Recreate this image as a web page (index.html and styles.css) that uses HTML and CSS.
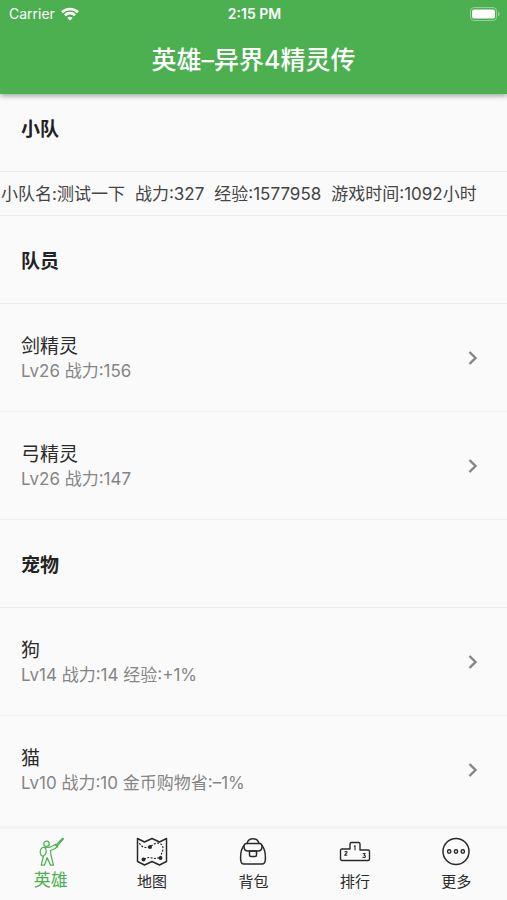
FILE: index.html
```html
<!DOCTYPE html>
<html lang="zh-CN">
<head>
<meta charset="utf-8">
<meta name="viewport" content="width=device-width, initial-scale=1">
<title>英雄–异界4精灵传</title>
<link rel="stylesheet" href="styles.css">
</head>
<body>
<header class="app-bar">
  <div class="status">
    <div class="carrier">
      <span>Carrier</span>
      <svg width="18" height="14" viewBox="0 0 18 14" fill="none" stroke="#fff" stroke-width="2.6" aria-hidden="true">
        <path d="M1 5.2C5.4.9 12.6.9 17 5.2M3.900 8.200c2.900-2.800 7.300-2.800 10.200 0"/>
        <path d="M6.300 10.700c1.500-1.400 3.900-1.400 5.400 0L9 13.500z" fill="#fff" stroke="none"/>
      </svg>
    </div>
    <span class="time">2:15 PM</span>
    <svg class="battery" width="30" height="14" viewBox="0 0 30 14" aria-hidden="true">
      <rect x=".5" y=".5" width="26" height="13" rx="3.5" fill="none" stroke="#fff" stroke-opacity=".4"/>
      <rect x="2" y="2.500" width="23" height="9" rx="2" fill="#fff"/>
      <path d="M28 4.500c2 .8 2 4.200 0 5z" fill="#fff" fill-opacity=".4"/>
    </svg>
  </div>
  <h1>英雄–异界4精灵传</h1>
</header>
<main>
  <h2 class="first">小队</h2>
  <p class="team"><span>小队名:测试一下</span><span>战力:327</span><span>经验:1577958</span><span>游戏时间:1092小时</span></p>
  <h2>队员</h2>
  <ul>
    <li><a href="#"><span class="text"><span class="name">剑精灵</span><span class="detail">Lv26 战力:156</span></span><svg class="chevron" width="10" height="16" viewBox="0 0 10 16" aria-hidden="true"><path d="M1.500 2 7.500 8l-6 6"/></svg></a></li>
    <li><a href="#"><span class="text"><span class="name">弓精灵</span><span class="detail">Lv26 战力:147</span></span><svg class="chevron" width="10" height="16" viewBox="0 0 10 16" aria-hidden="true"><path d="M1.500 2 7.500 8l-6 6"/></svg></a></li>
  </ul>
  <h2>宠物</h2>
  <ul class="last">
    <li><a href="#"><span class="text"><span class="name">狗</span><span class="detail">Lv14 战力:14 经验:+1%</span></span><svg class="chevron" width="10" height="16" viewBox="0 0 10 16" aria-hidden="true"><path d="M1.500 2 7.500 8l-6 6"/></svg></a></li>
    <li><a href="#"><span class="text"><span class="name">猫</span><span class="detail">Lv10 战力:10 金币购物省:–1%</span></span><svg class="chevron" width="10" height="16" viewBox="0 0 10 16" aria-hidden="true"><path d="M1.500 2 7.500 8l-6 6"/></svg></a></li>
  </ul>
</main>
<nav>
  <a class="active" href="#" aria-current="page">
    <svg width="32" height="32" viewBox="0 0 32 32" aria-hidden="true">
      <g stroke-width="1.200">
        <circle cx="11.500" cy="6.800" r="2.700"/>
        <path d="M9 10.300 15 10.200l5.500-2.700 1.700 2-2 2-4.700 2 .5 5 2.500 9.700h-3l-3.300-7.500-2.800 7.500H6.200L8.500 19"/>
        <path d="M9.500 10.500c-2-.8-4 1-4.300 4 0 2.300.8 4.200 2.500 4.800 2.300-.8 3.500-2.500 3.600-5 0-2-.6-3.200-1.800-3.800z"/>
        <path d="M20.500 8.500 28 .8M21.500 9.800 28.700 1.500M19.800 6.800l3.200 3.500"/>
      </g>
    </svg>
    <span>英雄</span>
  </a>
  <a href="#">
    <svg width="32" height="32" viewBox="0 0 32 32" aria-hidden="true">
      <path stroke-width="1.500" d="M1.500 1.500 8.500 5l7.500-3.500L23.500 5l7-3.500v23l-7 3.500-7.500-3.500L8.500 28l-7-3.500z"/>
      <path stroke-width="1.200" stroke-dasharray="2 1.400" d="M3.500 6c2 4.500 6 5.500 10.500 3.500l5-3c5-1.500 8 1 8 5 0 3.500-2 5-2.500 9M8 22l5-1.500 6 1 5.500-1"/>
      <g fill="currentColor" stroke="none"><circle cx="14" cy="10" r="2"/><circle cx="7.500" cy="22.500" r="2"/><circle cx="24.500" cy="21" r="2"/></g>
    </svg>
    <span>地图</span>
  </a>
  <a href="#">
    <svg width="32" height="32" viewBox="0 0 32 32" aria-hidden="true">
      <g stroke-width="1.500">
        <path d="M10 6.500C11.500.2 20.500.2 22 6.500"/>
        <path d="M9.500 6.500h13c2 0 2.500 1 2.500 3 0 3-1.500 4.500-4 4.500H11c-2.500 0-4-1.500-4-4.500 0-2 .5-3 2.500-3z"/>
        <path d="M7 8.500C4 12 3.300 17 3.700 23c.2 3 1 4 3.300 4h18c2.300 0 3.100-1 3.300-4 .4-6-.3-11-3.300-14.500"/>
        <path d="M12.500 14v4c0 1 .5 1.500 1.500 1.500h4c1 0 1.500-.5 1.500-1.500v-4z"/>
      </g>
    </svg>
    <span>背包</span>
  </a>
  <a href="#">
    <svg width="32" height="32" viewBox="0 0 32 32" aria-hidden="true">
      <path stroke-width="1.400" d="M11 12V7c0-1 .5-1.500 1.500-1.500h7c1 0 1.500.5 1.500 1.500v6h8c1 0 1.500.5 1.500 1.500V22c0 1-.5 1.500-1.500 1.500H3c-1 0-1.500-.5-1.500-1.500v-8.500c0-1 .5-1.500 1.500-1.500z"/>
      <path stroke-width="1.100" d="m15 9.500 1-.8v4.500M5.700 15.200c.5-1.100 2.500-1 2.300.3-.1 1-2 1.500-2.300 2.800h2.600M23.700 16.500h2.500l-1.200 1.700c2-.1 1.800 2.500-.2 2.300-.6 0-1-.3-1.200-.8"/>
    </svg>
    <span>排行</span>
  </a>
  <a href="#">
    <svg width="32" height="32" viewBox="0 0 32 32" aria-hidden="true">
      <circle cx="16" cy="14.500" r="13" stroke-width="1.500"/>
      <g stroke-width="1.400"><circle cx="9.200" cy="14.500" r="1.700"/><circle cx="16" cy="14.500" r="1.700"/><circle cx="22.800" cy="14.500" r="1.700"/></g>
    </svg>
    <span>更多</span>
  </a>
</nav>
</body>
</html>
```
FILE: styles.css
```css
* {
  box-sizing: border-box;
}

body {
  display: flex;
  flex-direction: column;
  min-height: 100vh;
  margin: 0;
  background: #fafafa;
  color: #2a2a2a;
  font-family: Inter, "Noto Sans CJK SC", sans-serif;
}

h1,
h2,
p,
ul {
  margin: 0;
  padding: 0;
}

a {
  color: inherit;
  text-decoration: none;
}

.app-bar {
  z-index: 1;
  padding-bottom: 16px;
  background: #4caf50;
  box-shadow: 0 2px 5px rgba(0, 0, 0, 0.35);
  color: #fff;
}

.status {
  display: grid;
  grid-template-columns: 1fr auto 1fr;
  align-items: center;
  height: 27px;
  padding: 0 7px 0 9px;
  font-size: 14px;
}

.carrier {
  display: flex;
  align-items: center;
  gap: 6px;
}

.time {
  font-size: 14px;
  font-weight: 600;
}

.battery {
  justify-self: end;
}

h1 {
  padding-top: 15px;
  font-size: 25px;
  font-weight: 500;
  line-height: 36px;
  text-align: center;
}

main {
  flex: 1;
}

h2 {
  padding: 32px 21px 27px;
  border-bottom: 1px solid #ececec;
  color: #222;
  font-size: 19px;
  font-weight: 600;
  line-height: 28px;
}

h2.first {
  padding-top: 22px;
}

.team {
  display: flex;
  gap: 10px;
  padding: 10px 1px 8px;
  border-bottom: 1px solid #ececec;
  color: #444;
  font-size: 17px;
  line-height: 25px;
  white-space: nowrap;
}

ul {
  list-style: none;
}

li a {
  display: flex;
  align-items: center;
  justify-content: space-between;
  padding: 30px 29px 29px 21px;
  border-bottom: 1px solid #f1f1f1;
}

.last li:last-child a {
  border-bottom: 0;
}

.text {
  display: flex;
  flex-direction: column;
}

.name {
  font-size: 19px;
  line-height: 26px;
}

.detail {
  color: #858585;
  font-size: 17px;
  line-height: 22px;
}

.chevron {
  fill: none;
  stroke: #858585;
  stroke-width: 2.4;
}

nav {
  display: grid;
  grid-template-columns: repeat(5, 1fr);
  height: 74px;
  padding-top: 8px;
  border-top: 3px solid #f3f3f3;
}

nav a {
  display: flex;
  flex-direction: column;
  align-items: center;
  font-size: 15px;
  line-height: 26px;
}

nav svg {
  fill: none;
  stroke: currentColor;
  stroke-linejoin: round;
}

nav .active {
  color: #4caf50;
  font-size: 17px;
  line-height: 22px;
}
```
